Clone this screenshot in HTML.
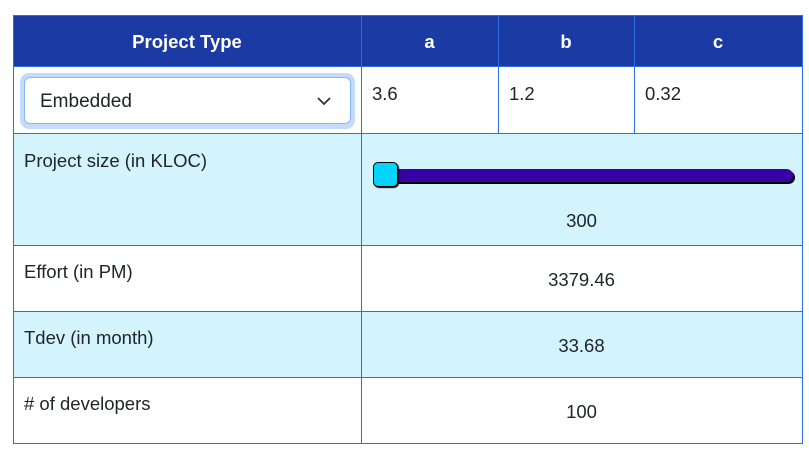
<!DOCTYPE html>
<html><head><style>
body{margin:0;width:809px;height:451px;background:#fff;font-family:"Liberation Sans",sans-serif;color:#212529;position:relative;overflow:hidden}
div{position:absolute;box-sizing:border-box}
.t{font-size:18.5px;white-space:nowrap;line-height:22px}
.h{color:#fff;font-weight:bold;font-size:18.5px;text-align:center;line-height:22px}
.c{text-align:center}
</style></head><body>
<div style="left:13px;top:15px;width:789px;height:51px;background:#1b3aa3"></div>
<div style="left:13px;top:133px;width:789px;height:112px;background:#d3f4fd"></div>
<div style="left:13px;top:311px;width:789px;height:66px;background:#d3f4fd"></div>
<div style="left:13px;top:15px;width:790px;height:429px;border:1px solid #2a6fe0"></div>
<div style="left:361px;top:15px;width:1px;height:429px;background:#2a6fe0"></div>
<div style="left:498px;top:15px;width:1px;height:118px;background:#2a6fe0"></div>
<div style="left:634px;top:15px;width:1px;height:118px;background:#2a6fe0"></div>
<div style="left:13px;top:66px;width:790px;height:1px;background:#2a6fe0"></div>
<div style="left:13px;top:133px;width:790px;height:1px;background:#2a6fe0"></div>
<div style="left:13px;top:245px;width:790px;height:1px;background:#2a6fe0"></div>
<div style="left:13px;top:311px;width:790px;height:1px;background:#2a6fe0"></div>
<div style="left:13px;top:377px;width:790px;height:1px;background:#2a6fe0"></div>
<div class="h" style="left:13px;top:31px;width:348px">Project Type</div>
<div class="h" style="left:361px;top:31px;width:137px">a</div>
<div class="h" style="left:498px;top:31px;width:136px">b</div>
<div class="h" style="left:634px;top:31px;width:168px">c</div>
<div style="left:20px;top:73px;width:335px;height:56px;border-radius:9px;background:#c4dcfc"></div>
<div style="left:24px;top:77px;width:327px;height:47px;border:1px solid #86b7fe;border-radius:6px;background:#fff"></div>
<div class="t" style="left:40px;top:91px;font-size:19px">Embedded</div>
<svg style="position:absolute;left:316px;top:95px" width="16" height="12"><path d="M2 3 L8 9 L14 3" fill="none" stroke="#333" stroke-width="1.8"/></svg>
<div class="t" style="left:372px;top:83px">3.6</div>
<div class="t" style="left:509px;top:83px">1.2</div>
<div class="t" style="left:645px;top:83px">0.32</div>
<div class="t" style="left:24px;top:150px">Project size (in KLOC)</div>
<div style="left:375px;top:171px;width:420px;height:13px;border-radius:7px;background:#000"></div>
<div style="left:373px;top:169px;width:420px;height:13px;border-radius:7px;background:#3a00a8"></div>
<div style="left:373px;top:162px;width:25px;height:25px;border-radius:5px;background:#00d4ff;border:1.5px solid #000;box-shadow:1px 1px 1px #000"></div>
<div class="t c" style="left:361px;top:210px;width:441px">300</div>
<div class="t" style="left:24px;top:261px">Effort (in PM)</div>
<div class="t c" style="left:361px;top:269px;width:441px">3379.46</div>
<div class="t" style="left:24px;top:327px">Tdev (in month)</div>
<div class="t c" style="left:361px;top:335px;width:441px">33.68</div>
<div class="t" style="left:24px;top:393px"># of developers</div>
<div class="t c" style="left:361px;top:401px;width:441px">100</div>
</body></html>
